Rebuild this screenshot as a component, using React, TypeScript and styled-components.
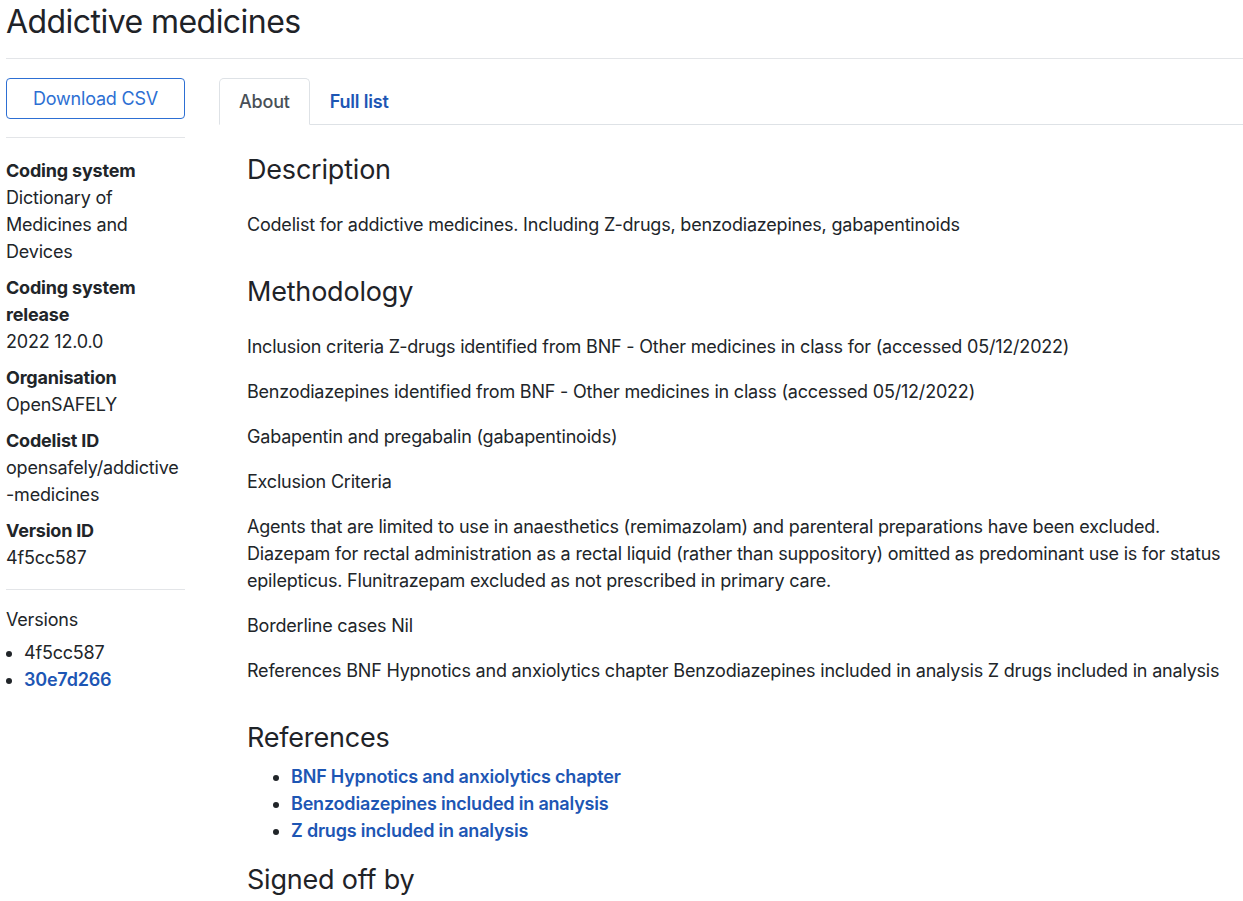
import React from "react";
import styled, { createGlobalStyle } from "styled-components";

const Global = createGlobalStyle`
  html, body { margin: 0; padding: 0; background: #fff; }
  body {
    font-family: Inter, "Liberation Sans", Arial, sans-serif;
    font-size: 18px;
    line-height: 27px;
    letter-spacing: -0.2px;
    color: #212529;
  }
  * { box-sizing: border-box; }
`;

const Page = styled.div`
  padding: 3px 0 40px 6px;
`;

const Title = styled.h1`
  margin: 0;
  font-size: 32px;
  line-height: 38px;
  font-weight: 400;
  letter-spacing: -0.55px;
  color: #1f2328;
`;

const Rule = styled.hr<{ $top?: number; $bottom?: number }>`
  border: 0;
  border-top: 1px solid #e3e5e8;
  margin: ${(p) => p.$top ?? 18}px 0 ${(p) => p.$bottom ?? 18}px;
`;

const Layout = styled.div`
  display: grid;
  grid-template-columns: 179px 1fr;
  column-gap: 34px;
  align-items: start;
`;

const Sidebar = styled.aside`
  display: flex;
  flex-direction: column;
`;

const OutlineButton = styled.button`
  font: inherit;
  letter-spacing: inherit;
  color: #2d6fd3;
  background: #fff;
  border: 1px solid #2d6fd3;
  border-radius: 4px;
  padding: 6px 12px;
  width: 100%;
  text-align: center;
  cursor: pointer;
`;

const Meta = styled.dl`
  margin: 0;
`;

const MetaTerm = styled.dt`
  font-weight: 700;
`;

const MetaValue = styled.dd`
  margin: 0 0 9px;
  word-break: break-word;
`;

const VersionsLabel = styled.div`
  margin: 6px 0 6px;
`;

const VersionList = styled.ul`
  margin: 0;
  padding-left: 18px;
`;

const VersionLink = styled.a`
  color: #1d56b4;
  font-weight: 600;
  text-decoration: none;
`;

const Main = styled.main`
  min-width: 0;
`;

const TabBar = styled.nav`
  display: flex;
  border-bottom: 1px solid #dee2e6;
`;

const Tab = styled.a<{ $active?: boolean }>`
  display: block;
  padding: 9px 19px;
  border: 1px solid ${(p) => (p.$active ? "#dee2e6" : "transparent")};
  border-bottom-color: ${(p) => (p.$active ? "#fff" : "transparent")};
  border-radius: 5px 5px 0 0;
  margin-bottom: -1px;
  color: ${(p) => (p.$active ? "#495057" : "#1d56b4")};
  font-weight: ${(p) => (p.$active ? 500 : 600)};
  text-decoration: none;
  background: ${(p) => (p.$active ? "#fff" : "transparent")};
`;

const Pane = styled.section`
  display: flex;
  flex-direction: column;
  padding: 28px 0 0 28px;
`;

const SectionTitle = styled.h2<{ $first?: boolean }>`
  margin: ${(p) => (p.$first ? 0 : 19)}px 0 8px;
  font-size: 27px;
  line-height: 34px;
  font-weight: 400;
  color: #1f2328;
`;

const Markdown = styled.div`
  display: flex;
  flex-direction: column;
  padding-top: 16px;
`;

const Para = styled.p`
  margin: 0 0 18px;
`;

const RefList = styled.ul`
  margin: 0;
  padding-left: 44px;
`;

const RefLink = styled.a`
  color: #1d56b4;
  font-weight: 600;
  text-decoration: none;
`;

const meta: [string, string][] = [
  ["Coding system", "Dictionary of Medicines and Devices"],
  ["Coding system release", "2022 12.0.0"],
  ["Organisation", "OpenSAFELY"],
  ["Codelist ID", "opensafely/addictive\u200B-medicines"],
  ["Version ID", "4f5cc587"],
];

const methodology = [
  "Inclusion criteria Z-drugs identified from BNF - Other medicines in class for (accessed 05/12/2022)",
  "Benzodiazepines identified from BNF - Other medicines in class (accessed 05/12/2022)",
  "Gabapentin and pregabalin (gabapentinoids)",
  "Exclusion Criteria",
  "Agents that are limited to use in anaesthetics (remimazolam) and parenteral preparations have been excluded. Diazepam for rectal administration as a rectal liquid (rather than suppository) omitted as predominant use is for status epilepticus. Flunitrazepam excluded as not prescribed in primary care.",
  "Borderline cases Nil",
  "References BNF Hypnotics and anxiolytics chapter Benzodiazepines included in analysis Z drugs included in analysis",
];

const refs = [
  "BNF Hypnotics and anxiolytics chapter",
  "Benzodiazepines included in analysis",
  "Z drugs included in analysis",
];

export default function App() {
  return (
    <Page>
      <Global />
      <Title>Addictive medicines</Title>
      <Rule $top={17} $bottom={19} />
      <Layout>
        <Sidebar>
          <OutlineButton>Download CSV</OutlineButton>
          <Rule $top={18} $bottom={19} />
          <Meta>
            {meta.map(([k, v]) => (
              <React.Fragment key={k}>
                <MetaTerm>{k}</MetaTerm>
                <MetaValue>{v}</MetaValue>
              </React.Fragment>
            ))}
          </Meta>
          <Rule $top={9} $bottom={10} />
          <VersionsLabel>Versions</VersionsLabel>
          <VersionList>
            <li>4f5cc587</li>
            <li>
              <VersionLink href="#">30e7d266</VersionLink>
            </li>
          </VersionList>
        </Sidebar>
        <Main>
          <TabBar>
            <Tab $active href="#">About</Tab>
            <Tab href="#">Full list</Tab>
          </TabBar>
          <Pane>
            <SectionTitle $first>Description</SectionTitle>
            <Markdown>
              <Para>
                Codelist for addictive medicines. Including Z-drugs, benzodiazepines, gabapentinoids
              </Para>
            </Markdown>
            <SectionTitle>Methodology</SectionTitle>
            <Markdown>
              {methodology.map((t) => (
                <Para key={t}>{t}</Para>
              ))}
            </Markdown>
            <SectionTitle>References</SectionTitle>
            <RefList>
              {refs.map((r) => (
                <li key={r}>
                  <RefLink href="#">{r}</RefLink>
                </li>
              ))}
            </RefList>
            <SectionTitle>Signed off by</SectionTitle>
          </Pane>
        </Main>
      </Layout>
    </Page>
  );
}
